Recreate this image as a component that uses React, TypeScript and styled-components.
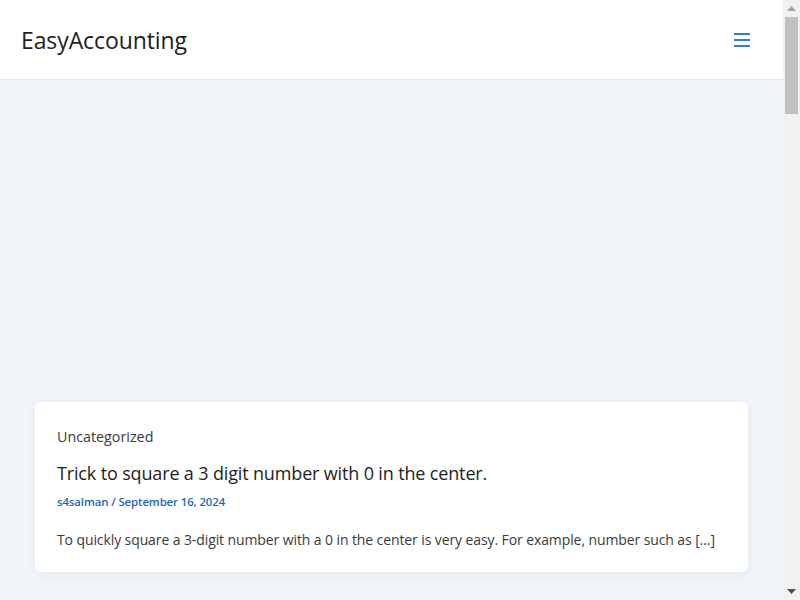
import React from 'react';
import styled, { createGlobalStyle } from 'styled-components';

const GlobalStyle = createGlobalStyle`
	html, body {
		margin: 0;
		padding: 0;
		height: 100%;
		overflow: hidden;
	}
	body {
		background: #f0f5fa;
		font-family: "Open Sans", "Noto Sans", sans-serif;
		color: #3a3a3a;
	}
	#root {
		height: 100%;
	}
	* {
		box-sizing: border-box;
	}
`;

const posts = [
	{
		category: 'Uncategorized',
		title: 'Trick to square a 3 digit number with 0 in the center.',
		author: 's4salman',
		date: 'September 16, 2024',
		excerpt: 'To quickly square a 3-digit number with a 0 in the center is very easy. For example, number such as […]',
	},
];

const App: React.FC = () => {
	return (
		<Viewport>
			<GlobalStyle />
			<Page>
				<Header>
					<Logo>EasyAccounting</Logo>
					<MenuToggle aria-label="Menu">
						<svg width="16" height="14" viewBox="0 0 16 14">
							<rect x="0" y="0" width="16" height="2" fill="#2f7fd1" />
							<rect x="0" y="6" width="16" height="2" fill="#2f7fd1" />
							<rect x="0" y="12" width="16" height="2" fill="#2f7fd1" />
						</svg>
					</MenuToggle>
				</Header>
				<Main>
					<AdSlot />
					{posts.map((post) => (
						<Card key={post.title}>
							<Category>{post.category}</Category>
							<PostTitle>{post.title}</PostTitle>
							<Meta>
								{post.author} / {post.date}
							</Meta>
							<Excerpt>{post.excerpt}</Excerpt>
						</Card>
					))}
				</Main>
			</Page>
			{/* page scrollbar, as the browser draws it */}
			<ScrollRail>
				<ScrollArrow>
					<svg width="9" height="5" viewBox="0 0 9 5">
						<polygon points="0,5 4.5,0 9,5" fill="#a3a3a3" />
					</svg>
				</ScrollArrow>
				<ScrollTrack>
					<ScrollThumb />
				</ScrollTrack>
				<ScrollArrow>
					<svg width="9" height="5" viewBox="0 0 9 5">
						<polygon points="0,0 4.5,5 9,0" fill="#505050" />
					</svg>
				</ScrollArrow>
			</ScrollRail>
		</Viewport>
	);
};

const Viewport = styled.div`
	display: flex;
	height: 100vh;
	overflow: hidden;
`;

const Page = styled.div`
	flex: 1;
	min-width: 0;
	overflow: hidden;
`;

const Header = styled.header`
	display: flex;
	align-items: center;
	justify-content: space-between;
	height: 80px;
	padding: 0 33px 0 21px;
	background: #ffffff;
	border-bottom: 1px solid #e3e7eb;
`;

const Logo = styled.div`
	font-size: 23px;
	font-weight: 500;
	color: #1e1e1e;
	letter-spacing: -0.1px;
`;

const MenuToggle = styled.button`
	display: flex;
	align-items: center;
	justify-content: center;
	padding: 0;
	border: none;
	background: transparent;
	cursor: pointer;
`;

const Main = styled.main`
	display: flex;
	flex-direction: column;
	padding: 0 35px;
`;

const AdSlot = styled.div`
	height: 322px;
`;

const Card = styled.article`
	display: flex;
	flex-direction: column;
	padding: 24px 22px 20px;
	background: #ffffff;
	border-radius: 6px;
	box-shadow: 0 2px 10px rgba(30, 50, 80, 0.06);
`;

const Category = styled.div`
	font-size: 14.3px;
	line-height: 22px;
	color: #3a3a3a;
`;

const PostTitle = styled.h2`
	margin: 12px 0 0;
	font-size: 18px;
	line-height: 26px;
	font-weight: 500;
	letter-spacing: -0.15px;
	color: #1e1e1e;
`;

const Meta = styled.div`
	margin-top: 7px;
	font-size: 11.4px;
	line-height: 18px;
	font-weight: 600;
	letter-spacing: -0.1px;
	color: #1e65b8;
`;

const Excerpt = styled.p`
	margin: 17px 0 0;
	font-size: 14px;
	line-height: 24px;
	letter-spacing: -0.1px;
	color: #3a3a3a;
`;

const ScrollRail = styled.div`
	display: flex;
	flex-direction: column;
	flex: 0 0 17px;
	background: #f1f1f1;
`;

const ScrollArrow = styled.div`
	display: flex;
	align-items: center;
	justify-content: center;
	height: 17px;
`;

const ScrollTrack = styled.div`
	flex: 1;
	padding: 0 2px;
`;

const ScrollThumb = styled.div`
	height: 97px;
	background: #c1c1c1;
`;

export default App;
